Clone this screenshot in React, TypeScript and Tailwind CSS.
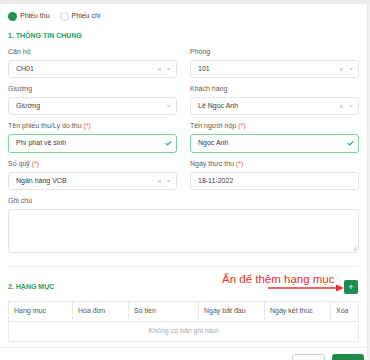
import { Check, ChevronDown, X } from "lucide-react";

const font = { fontFamily: "'Liberation Sans', Arial, sans-serif" };

function Label({ text, required }: { text: string; required?: boolean }) {
  return (
    <div className="text-[7px] leading-[12px] text-[#5a5a5a] mb-[2px]">
      {text} {required && <span className="text-[#f06060]">(*)</span>}
    </div>
  );
}

function SelectBox({ value, clear = true }: { value: string; clear?: boolean }) {
  return (
    <div className="h-[18px] rounded-[3px] border border-[#e4e4e4] pl-[7px] pr-[4px] flex items-center text-[7px] text-[#3a3a3a]">
      <span className="flex-1">{value}</span>
      {clear && <X className="w-[5px] h-[5px] text-[#999] mr-[4px]" strokeWidth={3} />}
      <ChevronDown className="w-[6px] h-[6px] text-[#999]" strokeWidth={3} />
    </div>
  );
}

function TextBox({ value, valid }: { value: string; valid?: boolean }) {
  return (
    <div
      className={
        valid
          ? "h-[19px] rounded-[3px] border border-[#7fd39e] pl-[7px] pr-[4px] flex items-center text-[7px] text-[#3a3a3a]"
          : "h-[18px] rounded-[3px] border border-[#e4e4e4] pl-[7px] pr-[4px] flex items-center text-[7px] text-[#3a3a3a]"
      }
    >
      <span className="flex-1">{value}</span>
      {valid && <Check className="w-[7px] h-[7px] text-[#2fa55a]" strokeWidth={4} />}
    </div>
  );
}

export default function App() {
  const cols = ["Hạng mục", "Hóa đơn", "Số tiền", "Ngày bắt đầu", "Ngày kết thúc", "Xóa"];
  return (
    <div className="relative w-[370px] h-[360px] overflow-hidden bg-white border-t-4 border-[#ececec]" style={font}>
      <div className="flex h-full">
        <div className="w-[367px] flex flex-col">
          <div className="px-[8px] pt-[6px]">
            {/* loại phiếu */}
            <div className="flex items-center h-[12px] text-[7px] text-[#444]">
              <span className="w-[9px] h-[9px] rounded-full bg-[#23934f]" />
              <span className="ml-[3px]">Phiếu thu</span>
              <span className="ml-[10px] w-[9px] h-[9px] rounded-full border border-[#d6d6d6] bg-white" />
              <span className="ml-[3px]">Phiếu chi</span>
            </div>

            <div className="mt-[8px] h-[11px] leading-[11px] text-[7px] font-bold text-[#2a9d5c]">
              1. THÔNG TIN CHUNG
            </div>

            <div className="mt-[5px] grid grid-cols-2 gap-x-[13px] gap-y-[5px]">
              <div>
                <Label text="Căn hộ" />
                <SelectBox value="CH01" />
              </div>
              <div>
                <Label text="Phòng" />
                <SelectBox value="101" />
              </div>
              <div>
                <Label text="Giường" />
                <SelectBox value="Giường" clear={false} />
              </div>
              <div>
                <Label text="Khách hàng" />
                <SelectBox value="Lê Ngọc Anh" />
              </div>
              <div>
                <Label text="Tên phiếu thu/Lý do thu" required />
                <TextBox value="Phí phạt vệ sinh" valid />
              </div>
              <div>
                <Label text="Tên người nộp" required />
                <TextBox value="Ngọc Anh" valid />
              </div>
              <div>
                <Label text="Số quỹ" required />
                <SelectBox value="Ngân hàng VCB" />
              </div>
              <div>
                <Label text="Ngày thực thu" required />
                <TextBox value="18-11-2022" />
              </div>
              <div className="col-span-2">
                <Label text="Ghi chú" />
                <div className="relative">
                  <textarea className="block w-full h-[44px] rounded-[3px] border border-[#e4e4e4] outline-none resize-none" />
                  <svg className="absolute right-[2px] bottom-[2px]" width="5" height="5" viewBox="0 0 5 5">
                    <path d="M1 5 L5 1 M3 5 L5 3" stroke="#b5b5b5" strokeWidth="0.8" />
                  </svg>
                </div>
              </div>
            </div>

            <div className="mt-[13px] border-t border-[#eeeeee]" />

            <div className="mt-[13px] h-[14px] flex items-center justify-between">
              <span className="text-[7px] font-bold text-[#2a9d5c]">2. HẠNG MỤC</span>
              <button className="w-[14px] h-[14px] rounded-[2px] bg-[#1f8a4c] text-white text-[9px] leading-none flex items-center justify-center mr-[1px]">
                +
              </button>
            </div>

            <div className="mt-[7px] border border-[#e8e8e8] text-[7px]">
              <div className="grid grid-cols-[64px_56px_70px_66px_66px_1fr] h-[19px] text-[#555]">
                {cols.map((c, i) => (
                  <div
                    key={c}
                    className={
                      i < cols.length - 1
                        ? "flex items-center pl-[5px] border-r border-[#e8e8e8]"
                        : "flex items-center pl-[5px]"
                    }
                  >
                    {c}
                  </div>
                ))}
              </div>
              <div className="h-[20px] border-t border-[#e8e8e8] flex items-center justify-center text-[#aaa]">
                Không có bản ghi nào!
              </div>
            </div>
          </div>

          <div className="mt-[5px] border-t border-[#eeeeee] pt-[6px] pr-[3px] flex justify-end gap-[7px] text-[7px]">
            <button className="w-[33px] h-[22px] rounded-[3px] border border-[#cfcfcf] bg-white text-[#555]">Hủy</button>
            <button className="w-[32px] h-[22px] rounded-[3px] bg-[#1f8a4c] text-white">Lưu</button>
          </div>
        </div>
        <div className="w-[3px] bg-[#f1f1f1] border-l border-[#e6e6e6]" />
      </div>

      {/* chú thích */}
      <div className="absolute left-[222px] top-[268px] text-[11.5px] leading-[14px] text-[#e8312a] whitespace-nowrap">
        Ấn để thêm hạng mục
      </div>
      <svg className="absolute left-[266px] top-[280px]" width="80" height="8" viewBox="0 0 80 8">
        <line x1="2" y1="4" x2="72" y2="4" stroke="#e8312a" strokeWidth="1.5" />
        <path d="M70 0.5 L78 4 L70 7.5 Z" fill="#e8312a" />
      </svg>
    </div>
  );
}
